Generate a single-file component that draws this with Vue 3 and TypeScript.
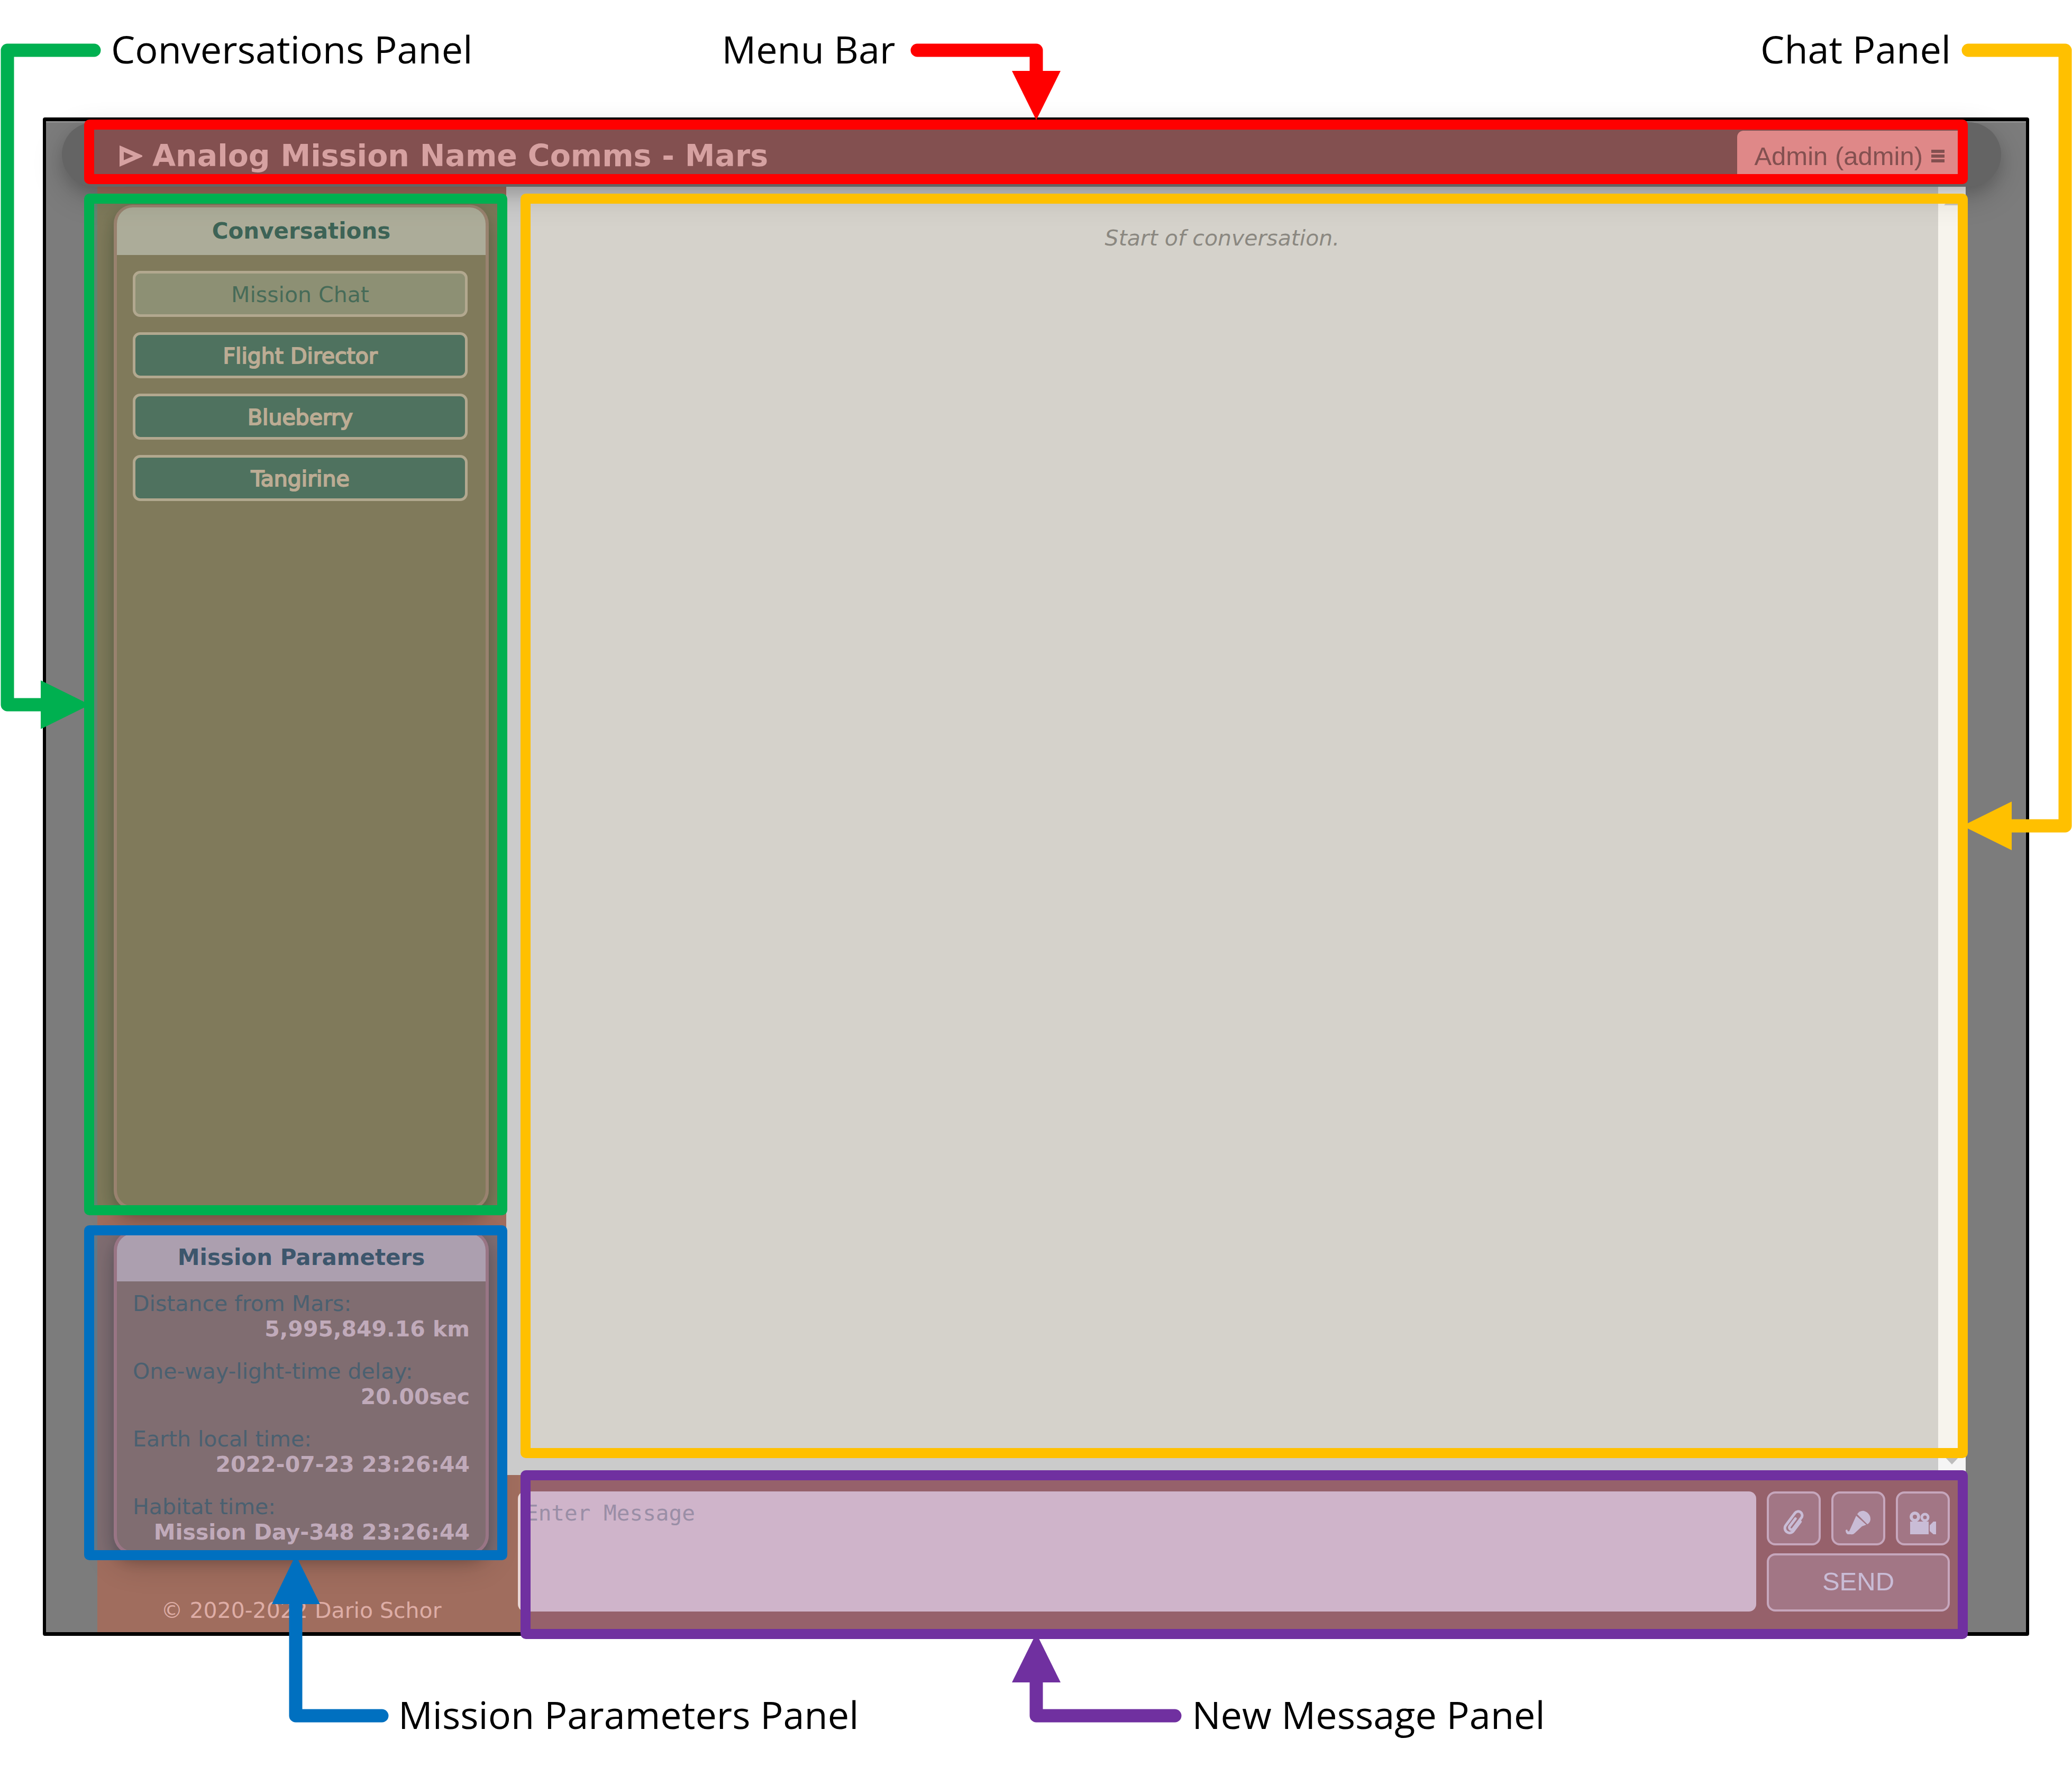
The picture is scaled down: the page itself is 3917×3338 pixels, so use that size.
<script setup lang="ts">
import { ref } from 'vue'

interface Conversation {
  id: number
  name: string
}

interface Parameter {
  label: string
  value: string
}

interface Connector {
  color: string
  line: string
  head: string
}

const conversations: Conversation[] = [
  { id: 1, name: 'Mission Chat' },
  { id: 2, name: 'Flight Director' },
  { id: 3, name: 'Blueberry' },
  { id: 4, name: 'Tangirine' },
]

const parameters: Parameter[] = [
  { label: 'Distance from Mars:', value: '5,995,849.16 km' },
  { label: 'One-way-light-time delay:', value: '20.00sec' },
  { label: 'Earth local time:', value: '2022-07-23 23:26:44' },
  { label: 'Habitat time:', value: 'Mission Day-348 23:26:44' },
]

// Lines that run from each caption to the region it names
const connectors: Connector[] = [
  { color: '#00b050', line: 'M178 95H14V1332H90', head: '77,1286 170,1332 77,1378' },
  { color: '#ff0000', line: 'M1734 95H1959V150', head: '1913,134 2005,134 1959,227' },
  { color: '#ffc000', line: 'M3721 95H3904V1561H3790', head: '3803,1515 3710,1561 3803,1607' },
  { color: '#0070c0', line: 'M722 3243H559V3020', head: '514,3032 605,3032 559,2939' },
  { color: '#7030a0', line: 'M2221 3243H1959V3170', head: '1913,3180 2005,3180 1959,3087' },
]

const activeId = ref(1)
const draft = ref('')
</script>

<template>
  <div class="page">
    <div class="captions captions-top">
      <span class="caption">Conversations Panel</span>
      <span class="caption">Menu Bar</span>
      <span class="caption caption-end">Chat Panel</span>
    </div>

    <div class="frame">
      <header class="menu-bar">
        <h1 class="title">
          <svg class="logo" viewBox="0 0 43 40" aria-hidden="true">
            <path d="M4 6L36 20L4 34Z" fill="none" stroke="currentColor" stroke-width="8" />
          </svg>
          Analog Mission Name Comms - Mars
        </h1>
        <button class="user-menu" type="button">
          Admin (admin)
          <svg class="bars" viewBox="0 0 25 24" aria-hidden="true">
            <path d="M0 3H25M0 12H25M0 21H25" stroke="currentColor" stroke-width="6" />
          </svg>
        </button>
        <div class="mark mark-menu" aria-hidden="true"></div>
      </header>

      <div class="layout">
        <aside class="sidebar">
          <div class="zone zone-grow">
            <section class="card">
              <h2 class="card-title">Conversations</h2>
              <nav class="conversation-list">
                <button
                  v-for="item in conversations"
                  :key="item.id"
                  type="button"
                  class="conversation"
                  :class="{ active: item.id === activeId }"
                  @click="activeId = item.id"
                >
                  {{ item.name }}
                </button>
              </nav>
            </section>
            <div class="mark mark-conversations" aria-hidden="true"></div>
          </div>

          <div class="zone">
            <section class="card">
              <h2 class="card-title">Mission Parameters</h2>
              <dl class="parameters">
                <div v-for="item in parameters" :key="item.label">
                  <dt>{{ item.label }}</dt>
                  <dd>{{ item.value }}</dd>
                </div>
              </dl>
            </section>
            <div class="mark mark-parameters" aria-hidden="true"></div>
          </div>

          <footer class="copyright">© 2020-2022 Dario Schor</footer>
        </aside>

        <main class="content">
          <section class="chat">
            <p class="chat-start">Start of conversation.</p>
            <div class="scrollbar" aria-hidden="true">
              <svg viewBox="0 0 30 16"><path d="M0 16L15 0L30 16Z" fill="currentColor" /></svg>
              <svg viewBox="0 0 30 16"><path d="M0 0L15 16L30 0Z" fill="currentColor" /></svg>
            </div>
            <div class="mark mark-chat" aria-hidden="true"></div>
          </section>

          <form class="composer" @submit.prevent>
            <textarea v-model="draft" class="message" placeholder="Enter Message" aria-label="Message"></textarea>
            <div class="actions">
              <button type="button" class="action" aria-label="Attach file">
                <svg viewBox="0 0 48 48" fill="none" stroke="currentColor" stroke-width="5" stroke-linecap="round">
                  <g transform="rotate(37 24 24)">
                    <path d="M33 15V37A9 9 0 0 1 15 37V8A7 7 0 0 1 30 8V34A4 4 0 0 1 22 34V16" />
                  </g>
                </svg>
              </button>
              <button type="button" class="action" aria-label="Record audio">
                <svg viewBox="0 0 48 48" fill="currentColor">
                  <path d="M22 8C25 3 30 1 35 2C42 4 47 10 47 17C47 21 45 25 41 27Z" />
                  <path d="M20 11L39 28L31 31L17 44Q14 47 10 46L4 46Q0 44 0 38L3 37Q4 42 7 40Z" />
                </svg>
              </button>
              <button type="button" class="action" aria-label="Record video">
                <svg viewBox="0 0 52 48" fill="currentColor">
                  <circle cx="11" cy="13" r="7" fill="none" stroke="currentColor" stroke-width="6" />
                  <circle cx="30" cy="14" r="6" fill="none" stroke="currentColor" stroke-width="5" />
                  <path d="M2 22H37V46H2ZM39 29L46 22H51V46H46L39 40Z" />
                </svg>
              </button>
              <button type="submit" class="action send">SEND</button>
            </div>
            <div class="mark mark-composer" aria-hidden="true"></div>
          </form>
        </main>
      </div>
    </div>

    <div class="captions captions-bottom">
      <span class="caption">Mission Parameters Panel</span>
      <span class="caption">New Message Panel</span>
    </div>

    <svg class="connectors" viewBox="0 0 3917 3338" preserveAspectRatio="none" aria-hidden="true">
      <g v-for="item in connectors" :key="item.color">
        <path
          :d="item.line"
          :stroke="item.color"
          fill="none"
          stroke-width="25"
          stroke-linejoin="round"
          stroke-linecap="round"
        />
        <polygon :points="item.head" :fill="item.color" />
      </g>
    </svg>
  </div>
</template>

<style>
body {
  background: #ffffff;
}
</style>

<style scoped>
.page {
  position: relative;
  box-sizing: border-box;
  display: flex;
  flex-direction: column;
  min-height: 100vh;
  font-family: "DejaVu Sans", Verdana, sans-serif;
  font-size: 41px;
  line-height: 48px;
}

h1,
h2,
p,
dl,
dd {
  margin: 0;
}

button {
  font: inherit;
  cursor: pointer;
}

.captions {
  display: flex;
  box-sizing: border-box;
  font-family: "Open Sans", sans-serif;
  font-size: 72px;
  line-height: 88px;
  color: #000000;
  white-space: nowrap;
}

.captions-top {
  height: 222px;
  padding: 48px 229px 0 210px;
  gap: 471px;
}

.caption-end {
  margin-left: auto;
}

.captions-bottom {
  height: 246px;
  padding: 104px 0 0 753px;
  gap: 630px;
}

.frame {
  flex: 1;
  display: flex;
  flex-direction: column;
  margin: 0 81px;
  border: 7px solid #000000;
  border-width: 7px 6px;
  border-radius: 4px;
  background: #7c7c7c;
  box-shadow: inset 0 3px #909090;
}

.menu-bar {
  position: relative;
  z-index: 1;
  display: flex;
  align-items: flex-start;
  justify-content: space-between;
  box-sizing: border-box;
  height: 122px;
  margin: 2px 47px 0 30px;
  padding: 16px 67px 0 109px;
  border-radius: 61px;
  background: #646464;
  box-shadow: 0 12px 24px rgba(0, 0, 0, 0.1), 0 18px 58px rgba(0, 0, 0, 0.19);
}

.title {
  display: flex;
  align-items: center;
  gap: 19px;
  font-size: 57px;
  line-height: 95px;
  color: #cccaca;
}

.logo {
  width: 43px;
  height: 40px;
}

.user-menu {
  display: flex;
  align-items: center;
  gap: 16px;
  height: 95px;
  padding: 0 40px 0 32px;
  border: 0;
  border-radius: 12px;
  background: #d8abab;
  color: #646464;
  font-family: "Liberation Sans", Arial, sans-serif;
  font-size: 49px;
}

.bars {
  width: 25px;
  height: 24px;
}

.layout {
  flex: 1;
  display: flex;
  margin: 0 114px 0 97px;
  background: #a06d5e;
}

.sidebar {
  display: flex;
  flex-direction: column;
  flex: none;
  box-sizing: border-box;
  width: 773px;
  padding: 34px 33px 17px 31px;
}

.zone {
  position: relative;
  display: flex;
  flex-direction: column;
}

.zone-grow {
  flex: 1;
  margin-bottom: 41px;
}

.card {
  flex: 1;
  border: 6px solid #c07777;
  border-top-width: 5px;
  border-radius: 36px;
  overflow: hidden;
  box-shadow: 0 12px 24px rgba(0, 0, 0, 0.2), 0 18px 58px rgba(0, 0, 0, 0.19);
}

.card-title {
  padding: 20px 0;
  background: #d8acac;
  color: #4d5158;
  font-size: 42px;
  line-height: 50px;
  text-align: center;
}

.conversation-list {
  display: flex;
  flex-direction: column;
  gap: 29px;
  padding: 30px 34px 30px 30px;
}

.conversation {
  height: 87px;
  padding: 2px 0 0;
  border: 5px solid #dfa79f;
  border-radius: 14px;
  background: #636363;
  color: #ecaca5;
  -webkit-text-stroke: 2px currentColor;
}

.conversation.active {
  background: #b1897e;
  color: #595b5b;
  -webkit-text-stroke: 0;
}

.parameters {
  display: flex;
  flex-direction: column;
  gap: 32px;
  padding: 18px 30px 12px;
  color: #5d5d5d;
}

.parameters dd {
  color: #f0bab9;
  font-weight: bold;
  text-align: right;
}

.copyright {
  margin-top: 82px;
  color: #deada6;
  text-align: center;
}

.content {
  flex: 1;
  display: flex;
  flex-direction: column;
  min-width: 0;
}

.chat {
  position: relative;
  flex: 1;
  display: flex;
  background: #cbcbcb;
}

.chat-start {
  flex: 1;
  padding-top: 73px;
  color: #6e6e6e;
  font-style: italic;
  text-align: center;
}

.scrollbar {
  display: flex;
  flex-direction: column;
  align-items: center;
  justify-content: space-between;
  box-sizing: border-box;
  width: 52px;
  padding: 19px 0 20px;
  background: #f5f5f5;
  color: #bdbdbd;
}

.scrollbar svg {
  width: 30px;
  height: 16px;
}

.composer {
  position: relative;
  display: flex;
  gap: 20px;
  padding: 31px 30px 39px 22px;
}

.message {
  flex: 1;
  box-sizing: border-box;
  height: 227px;
  padding: 17px 14px;
  border: 0;
  border-radius: 14px;
  background: #e8d5d5;
  font-family: "DejaVu Sans Mono", monospace;
  font-size: 41px;
  line-height: 48px;
  resize: none;
}

.message::placeholder {
  color: #a5a5a8;
  opacity: 1;
}

.actions {
  display: grid;
  grid-template-columns: repeat(3, 102px);
  grid-template-rows: 102px 110px;
  gap: 15px 20px;
}

.action {
  display: flex;
  align-items: center;
  justify-content: center;
  padding: 0;
  border: 4px solid #dcc4c4;
  border-radius: 16px;
  background: #b0887f;
  color: #e0dfe4;
}

.action svg {
  height: 48px;
  margin-top: 16px;
}

.send {
  grid-column: 1 / -1;
  padding-bottom: 4px;
  font-family: "Liberation Sans", Arial, sans-serif;
  font-size: 49px;
}

/* Tinted outlines laid over the region they name */
.mark {
  position: absolute;
  z-index: 2;
  border: 19px solid;
  border-radius: 10px;
  background-clip: padding-box;
  pointer-events: none;
}

.mark-menu {
  inset: -5px 63px 5px 42px;
  border-color: #ff0000;
  background-color: rgba(255, 0, 0, 0.2);
}

.mark-conversations {
  inset: -21px -35px -11px -56px;
  border-color: #00b050;
  background-color: rgba(0, 176, 80, 0.2);
}

.mark-parameters {
  inset: -11px -35px -11px -56px;
  border-color: #0070c0;
  background-color: rgba(0, 112, 192, 0.2);
}

.mark-chat {
  inset: 13px -4px 32px 27px;
  border-color: #ffc000;
  background-color: rgba(255, 242, 204, 0.2);
}

.mark-composer {
  inset: -9px -4px -13px 27px;
  border-color: #7030a0;
  background-color: rgba(112, 48, 160, 0.2);
}

.connectors {
  position: absolute;
  z-index: 3;
  top: 0;
  left: 0;
  width: 100%;
  height: 100%;
  pointer-events: none;
}
</style>
